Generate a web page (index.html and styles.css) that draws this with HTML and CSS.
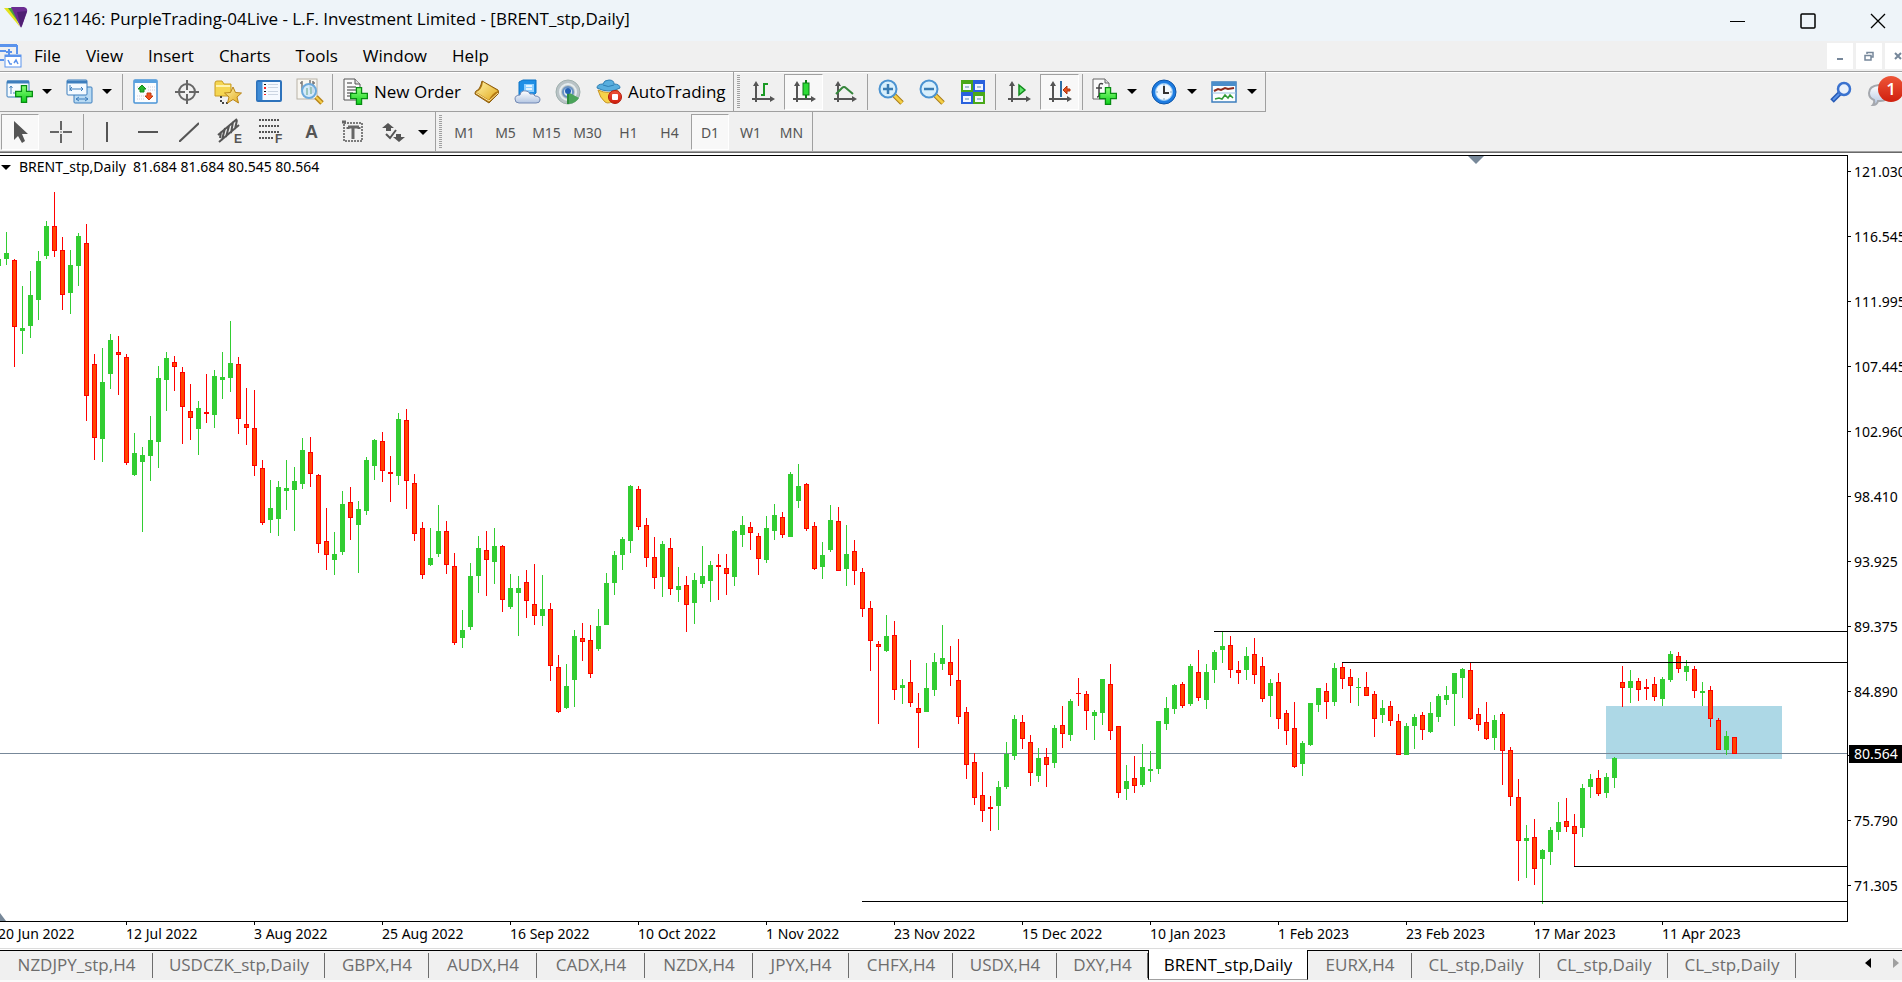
FILE: index.html
```html
<!DOCTYPE html>
<html lang="en">
<head>
    <meta charset="UTF-8">
    <meta name="viewport" content="width=device-width, initial-scale=1.0">
    <title>1621146: PurpleTrading-04Live - L.F. Investment Limited - [BRENT_stp,Daily]</title>
    <link rel="stylesheet" href="styles.css">
</head>
<body>
    <!-- shared gradients and symbols -->
    <svg class="defs" width="0" height="0" aria-hidden="true">
        <defs>
            <linearGradient id="plusFill" x1="0" y1="0" x2="0" y2="1"><stop offset="0" stop-color="#8dff7a"/><stop offset="1" stop-color="#0fd01c"/></linearGradient>
            <linearGradient id="goldFill" x1="0" y1="0" x2="1" y2="1"><stop offset="0" stop-color="#fff3a8"/><stop offset="1" stop-color="#e2a91c"/></linearGradient>
            <linearGradient id="cloudFill" x1="0" y1="0" x2="0" y2="1"><stop offset="0" stop-color="#ffffff"/><stop offset="1" stop-color="#b4c6e2"/></linearGradient>
            <linearGradient id="redFill" x1="0" y1="0" x2="0" y2="1"><stop offset="0" stop-color="#f0573a"/><stop offset="1" stop-color="#cf1c0c"/></linearGradient>
            <symbol id="plus" viewBox="0 0 14 14"><path d="M5 .5h4V5h4.500v4H9v4.500H5V9H.5V5H5z" fill="url(#plusFill)" stroke="#078c12"/></symbol>
            <symbol id="axes" viewBox="0 0 24 24"><path d="M5 22V4M1 19h19" stroke="#555" stroke-width="2" fill="none"/><path d="M2 6l3-5 3 5zM19 16l5 3-5 3z" fill="#555"/></symbol>
        </defs>
    </svg>

    <header class="titlebar">
        <svg class="logo" width="24" height="22" viewBox="0 0 24 22" aria-hidden="true">
            <path d="M0 1h7l9 19z" fill="#e3e21c"/>
            <path d="M4 1h5l8 18z" fill="#4aa23c"/>
            <path d="M7 0h13q4 1 3 5l-5 14q-1 2-2 0z" fill="#6b2c91"/>
            <path d="M13 5l10-1-6 17z" fill="#4f1f73"/>
        </svg>
        <h1>1621146: PurpleTrading-04Live - L.F. Investment Limited - [BRENT_stp,Daily]</h1>
        <div class="window-controls">
            <button aria-label="Minimize"><svg width="16" height="16"><path d="M0 8.500h15" stroke="#000"/></svg></button>
            <button aria-label="Maximize"><svg width="16" height="16"><rect x="1" y="1" width="14" height="14" rx="1" fill="none" stroke="#000" stroke-width="1.500"/></svg></button>
            <button aria-label="Close"><svg width="16" height="16"><path d="M1 1l14 14M15 1L1 15" stroke="#000" stroke-width="1.300"/></svg></button>
        </div>
    </header>

    <nav class="menubar">
        <svg width="22" height="24" viewBox="0 0 22 24" aria-hidden="true">
            <path d="M0 2h17v8M0 7h6M9 5v6M6 8h6M0 16h4" fill="none" stroke="#5b93ec" stroke-width="2"/>
            <path d="M0 1.500h17" stroke="#5b93ec" stroke-width="3"/>
            <rect x="5" y="11" width="16" height="12" fill="#fff" stroke="#5b93ec"/>
            <path d="M5 12h16" stroke="#5b93ec" stroke-width="2"/>
            <path d="M8 16l2 4h2M14 19l2-3 2 4" fill="none" stroke="#5b93ec" stroke-width="1.500"/>
        </svg>
        <ul>
            <li><button>File</button></li>
            <li><button>View</button></li>
            <li><button>Insert</button></li>
            <li><button>Charts</button></li>
            <li><button>Tools</button></li>
            <li><button>Window</button></li>
            <li><button>Help</button></li>
        </ul>
        <div class="child-controls">
            <button aria-label="Minimize chart"><svg width="10" height="10"><path d="M2 8h6" stroke="#76879a" stroke-width="2"/></svg></button>
            <button aria-label="Restore chart"><svg width="10" height="10"><path d="M3 3V1.500h6V6H7M1 4.500h6V9H1z" fill="none" stroke="#76879a" stroke-width="1.500"/></svg></button>
            <button aria-label="Close chart"><svg width="10" height="10"><path d="M2 2l6 6M8 2L2 8" stroke="#76879a" stroke-width="2"/></svg></button>
        </div>
    </nav>

    <div class="toolbar">
        <div class="group">
            <button class="tool drop" aria-label="New chart">
                <svg width="28" height="26"><rect x="1" y="2" width="22" height="16" rx="1" fill="#f4faff" stroke="#3d7ebd"/><path d="M1 3h22" stroke="#3d7ebd" stroke-width="3"/><path d="M5 15V7m-1.500 2L5 7l1.500 2M7 14h5m-2-2 2 2-2 2" fill="none" stroke="#4a86bd"/><use href="#plus" x="9" y="6" width="18" height="18"/></svg>
                <i class="arrow"></i>
            </button>
            <button class="tool drop" aria-label="Profiles">
                <svg width="28" height="26"><rect x="8" y="8" width="18" height="16" rx="1" fill="#b8daf3" stroke="#3d7ebd"/><path d="M10 20h12m-9-2-3 2 3 2m6-4 3 2-3 2" stroke="#3d7ebd" fill="none"/><rect x="1" y="1" width="20" height="15" rx="1" fill="#f4faff" stroke="#3d7ebd"/><path d="M1 3h20" stroke="#3d7ebd" stroke-width="3"/><path d="M4 6v6M4 10h13m-11-2-2 2 2 2m9-4 2 2-2 2" stroke="#3d7ebd" fill="none"/></svg>
                <i class="arrow"></i>
            </button>
            <span class="sep"></span>
            <button class="tool" aria-label="Market Watch">
                <svg width="26" height="26"><rect x="1" y="1" width="23" height="23" rx="1" fill="#fbfdff" stroke="#4a94d6" stroke-width="1.500"/><path d="M1 2.500h23" stroke="#5aa2e0" stroke-width="3"/><path d="M4 8h5M15 8h7M15 11h7M4 17h7M4 20h7" stroke="#ccd" stroke-dasharray="1 1"/><path d="M9 6l4 4h-2v3H7v-3H5z" fill="#25b62d" stroke="#138a1c"/><path d="M16 21l-4-4h2v-3h4v3h2z" fill="#f4531d" stroke="#bf3b10"/></svg>
            </button>
            <button class="tool" aria-label="Data Window">
                <svg width="26" height="26"><circle cx="13" cy="13" r="8" fill="none" stroke="#666" stroke-width="2"/><path d="M13 1v10M13 15v10M1 13h10M15 13h10" stroke="#666" stroke-width="2"/></svg>
            </button>
            <button class="tool" aria-label="Navigator">
                <svg width="28" height="26"><path d="M1 4q0-2 2-2h5l2 3h7v12H1z" fill="#f5d652" stroke="#c89b25"/><path d="M2 7h14" stroke="#fff3b0" stroke-width="2"/><path d="M7 17v7h7" stroke="#444" stroke-width="2" stroke-dasharray="2 2" fill="none"/><path d="M19 8l2.500 5.500 6 .500-4.500 4 1.500 6-5.500-3.500-5.500 3.500 1.500-6-4.500-4 6-.5z" fill="url(#goldFill)" stroke="#b98518"/></svg>
            </button>
            <button class="tool" aria-label="Terminal">
                <svg width="26" height="26"><rect x="1" y="2" width="24" height="20" rx="1" fill="#f5f9ff" stroke="#2d72bb" stroke-width="2"/><path d="M4 3v18" stroke="#3f8cd6" stroke-width="5"/><path d="M9 5v1M9 12v1" stroke="#111" stroke-width="2"/><path d="M9 8v2M9 15v1" stroke="#f22" stroke-width="2"/><path d="M12 5.500h10M12 8.500h10M12 12.500h10M12 15.500h10" stroke="#ccd5e2"/></svg>
            </button>
            <button class="tool" aria-label="Strategy Tester">
                <svg width="28" height="28"><rect x="1" y="1" width="20" height="20" fill="#f8f6f0" stroke="#b7b2a6"/><path d="M6 3v9M4 5h2M6 10h2M14 2v10M17 3v12M17 5h2" stroke="#777" stroke-width="1.500"/><path d="M20 19l6 6" stroke="#b9861a" stroke-width="5"/><path d="M20 19l6 6" stroke="#f4cd4b" stroke-width="2"/><circle cx="13" cy="13" r="7" fill="#cfe9fb" fill-opacity=".85" stroke="#6ba9dc" stroke-width="2"/><path d="M11 10v7M15 9v7" stroke="#8ba" stroke-width="1.500"/></svg>
            </button>
            <span class="sep"></span>
            <button class="tool wide order">
                <svg width="26" height="28"><path d="M2 1h11l5 5v16H2z" fill="#fafafa" stroke="#555"/><path d="M13 1v5h5" fill="#ddd" stroke="#555"/><path d="M5 5h5M5 9h9M5 12h9M5 15h6M5 18h4" stroke="#777" stroke-width="1.500"/><use href="#plus" x="8" y="9" width="18" height="18"/></svg>
                New Order
            </button>
            <button class="tool" aria-label="MetaEditor">
                <svg width="26" height="26"><path d="M8 2l16 9q1 2 0 4l-9 9L1 15q0-2 1-3 4-1 6-10z" fill="#b57a12" stroke="#8e5f0d"/><path d="M9 3l15 9q-6 2-9 9L2 13q6-2 7-10z" fill="url(#goldFill)"/><path d="M2 14l13 8 9-8" fill="none" stroke="#ffe9a2"/></svg>
            </button>
            <button class="tool" aria-label="Virtual Hosting">
                <svg width="28" height="26"><path d="M5 3l4-2h13v13l-4 3H5z" fill="#1e8fe6" stroke="#0f74c5"/><path d="M10 5h10v8H10z" fill="#8fd0ff"/><path d="M12 7h6M12 10h6" stroke="#fff" stroke-width="1.500"/><path d="M5 24q-4 0-4-4t5-4q1-5 6-4 3 0 4 3 4-1 5 2 5 0 5 4 0 3-4 3z" fill="url(#cloudFill)" stroke="#7289b5"/></svg>
            </button>
            <button class="tool" aria-label="Signals">
                <svg width="28" height="26"><circle cx="13" cy="13" r="12" fill="#b9c3c6" stroke="#9fb0ae"/><circle cx="13" cy="13" r="8" fill="none" stroke="#e4ecee" stroke-width="2"/><circle cx="13" cy="13" r="5" fill="#dce8f2" stroke="#6791c2" stroke-width="2"/><path d="M13 13l1 12q7-1 10-6z" fill="#4ba45a"/><path d="M13 13v12" stroke="#2c8b3b" stroke-width="2"/><circle cx="13" cy="12" r="3" fill="#2161b5"/></svg>
            </button>
            <button class="tool wide auto">
                <svg width="26" height="26"><path d="M2 11q11 5 20 0l-3 9q-6 6-10 3-5-4-7-12z" fill="#f6d24a" stroke="#c8962a"/><path d="M1 9q0-4 6-4 1-4 6-4t5 4q6 0 6 4-11 6-23 0z" fill="#58aede" stroke="#2e7fb4"/><path d="M7 6q5 3 11 0" fill="none" stroke="#2e7fb4"/><circle cx="19" cy="18" r="6.500" fill="url(#redFill)" stroke="#b41a0b"/><rect x="16" y="15" width="6" height="6" rx="1" fill="#fff"/></svg>
                AutoTrading
            </button>
        </div>
        <div class="group">
            <span class="grip"></span>
            <button class="tool" aria-label="Bar Chart">
                <svg width="24" height="24"><use href="#axes" width="24" height="24"/><path d="M10 15h3V4h4" fill="none" stroke="#1a9a24" stroke-width="2"/></svg>
            </button>
            <button class="tool on" aria-label="Candlesticks">
                <svg width="24" height="24"><use href="#axes" width="24" height="24"/><path d="M14 0v18" stroke="#0b7d14" stroke-width="2"/><rect x="11" y="3" width="6" height="12" fill="#2ddc37" stroke="#0b7d14"/></svg>
            </button>
            <button class="tool" aria-label="Line Chart">
                <svg width="24" height="24"><use href="#axes" width="24" height="24"/><path d="M3 14l6-6q2-2 4 0l7 6" fill="none" stroke="#35853b" stroke-width="2"/></svg>
            </button>
            <span class="sep"></span>
            <button class="tool" aria-label="Zoom In">
                <svg width="26" height="26"><path d="M16 16l8 8" stroke="#a87c16" stroke-width="5"/><path d="M16 16l8 8" stroke="#f3cd45" stroke-width="3"/><circle cx="10" cy="10" r="8.500" fill="#d8effc" stroke="#4b93d1" stroke-width="2"/><path d="M10 5v10M5 10h10" stroke="#3a7cb3" stroke-width="2.500"/></svg>
            </button>
            <button class="tool" aria-label="Zoom Out">
                <svg width="26" height="26"><path d="M16 16l8 8" stroke="#a87c16" stroke-width="5"/><path d="M16 16l8 8" stroke="#f3cd45" stroke-width="3"/><circle cx="10" cy="10" r="8.500" fill="#d8effc" stroke="#4b93d1" stroke-width="2"/><path d="M5 10h10" stroke="#3a7cb3" stroke-width="2.500"/></svg>
            </button>
            <button class="tool" aria-label="Tile Windows">
                <svg width="26" height="26"><path d="M1 1h12v12H1zM13 13h12v12H13z" fill="#4aa81a"/><path d="M13 1h12v12H13zM1 13h12v12H1z" fill="#2961dd"/><path d="M3 5h8v6H3zM15 5h8v6h-8zM3 17h8v6H3zM15 17h8v6h-8z" fill="#f3f7ff"/><path d="M5 8h4M17 8h4M5 20h4M17 20h4" stroke="#8fb0c9" stroke-width="1.500"/></svg>
            </button>
            <span class="sep"></span>
            <button class="tool" aria-label="Auto Scroll">
                <svg width="24" height="24"><use href="#axes" width="24" height="24"/><path d="M12 5l6 5-6 5z" fill="#5fe56a" stroke="#128a1c" stroke-width="1.500"/></svg>
            </button>
            <button class="tool on" aria-label="Chart Shift">
                <svg width="24" height="24"><use href="#axes" width="24" height="24"/><path d="M13 1v16" stroke="#2c6fa5" stroke-width="2"/><path d="M15 10l4-4v3h3v2h-3v3z" fill="#e2501e" stroke="#b1340c"/></svg>
            </button>
            <span class="sep"></span>
            <button class="tool drop" aria-label="Indicators">
                <svg width="26" height="28"><path d="M2 1h12l4 4v16H2z" fill="#fafafa" stroke="#666"/><path d="M14 1v4h4" fill="#ddd" stroke="#666"/><path d="M12 6q-4-2-4 3v8q0 2-2 2M5 10h6" fill="none" stroke="#444" stroke-width="1.500"/><use href="#plus" x="8" y="9" width="18" height="18"/></svg>
                <i class="arrow"></i>
            </button>
            <button class="tool drop" aria-label="Periods">
                <svg width="26" height="26"><circle cx="13" cy="13" r="12" fill="#1d7be0" stroke="#0d55a8"/><circle cx="13" cy="13" r="8.500" fill="#f2f8fd" stroke="#8cc6f8"/><path d="M13 7v7h5" fill="none" stroke="#333" stroke-width="2"/><path d="M13 5v2M13 19v2M5 13h2M19 13h2" stroke="#7fa8c8"/></svg>
                <i class="arrow"></i>
            </button>
            <button class="tool drop" aria-label="Templates">
                <svg width="26" height="24"><rect x="1" y="2" width="24" height="20" fill="#fbfdff" stroke="#3d7ebd" stroke-width="1.500"/><path d="M1 4h24" stroke="#4a8dca" stroke-width="4"/><path d="M1 13h24" stroke="#9cc4e4"/><path d="M3 11l4-2 3 1 4-2 3 1 6-1" fill="none" stroke="#8c2a1c" stroke-width="2"/><path d="M4 19l4-1 3 1 3-4 3 3 2-3 3 3" fill="none" stroke="#2f9a35" stroke-width="1.500"/></svg>
                <i class="arrow"></i>
            </button>
        </div>
        <div class="side-tools">
            <button aria-label="Search">
                <svg width="22" height="22"><path d="M2 20l8-8" stroke="#2559b5" stroke-width="5"/><path d="M3 19l7-7" stroke="#5b93e8" stroke-width="2"/><circle cx="14" cy="8" r="6" fill="#eaf1fb" stroke="#3a72cf" stroke-width="2.500"/></svg>
            </button>
            <button class="messages" aria-label="Messages">
                <svg width="28" height="24"><path d="M11 2q10-1 10 8t-11 8q-1 4-5 4 2-2 1-5-5-2-5-7 0-7 10-8z" fill="url(#cloudFill)" stroke="#a5a8ae" stroke-width="2"/></svg>
                <span class="badge">1</span>
            </button>
        </div>
    </div>

    <div class="toolbar lines">
        <div class="group">
            <button class="tool on" aria-label="Cursor">
                <svg width="24" height="24"><path d="M6 1v19l4-4 4 7 3-2-3-7h6z" fill="#555"/></svg>
            </button>
            <button class="tool" aria-label="Crosshair">
                <svg width="24" height="24"><path d="M12 1v9M12 14v9M1 12h9M14 12h9M12 11.500v1" stroke="#666" stroke-width="2"/></svg>
            </button>
            <span class="sep"></span>
            <button class="tool" aria-label="Vertical Line"><svg width="20" height="20"><path d="M10 0v20" stroke="#555" stroke-width="2"/></svg></button>
            <button class="tool" aria-label="Horizontal Line"><svg width="20" height="20"><path d="M0 10h20" stroke="#555" stroke-width="2"/></svg></button>
            <button class="tool" aria-label="Trendline"><svg width="20" height="20"><path d="M0 20L20 1" stroke="#555" stroke-width="2"/></svg></button>
            <button class="tool" aria-label="Equidistant Channel">
                <svg width="26" height="28"><path d="M1 17L20 1M2 24L22 7M4 14l-1 6M8 10l-3 12M12 8L9 19M16 4l-2 11M20 2l-2 9" stroke="#555" stroke-width="2"/><text x="17" y="25" class="mark">E</text></svg>
            </button>
            <button class="tool" aria-label="Fibonacci">
                <svg width="26" height="28"><path d="M1 2h20M1 8h20M1 14h20M1 20h14" stroke="#555" stroke-width="2" stroke-dasharray="2 1"/><text x="17" y="25" class="mark">F</text></svg>
            </button>
            <button class="tool letter">A</button>
            <button class="tool" aria-label="Text Label">
                <svg width="22" height="24"><rect x="2" y="3" width="18" height="18" fill="none" stroke="#555" stroke-width="1.500" stroke-dasharray="2 1"/><path d="M0 2h4M6 7h11M11 7v12M6 7v2M17 7v2" stroke="#666" stroke-width="3"/></svg>
            </button>
            <button class="tool drop" aria-label="Arrows">
                <svg width="24" height="24"><path d="M6 3l6 5H9v3H4V8H0zM17 22l-6-5h3v-3h5v3h4z" fill="#555"/><path d="M4 14l4 4 6-8" fill="none" stroke="#555" stroke-width="2"/></svg>
                <i class="arrow"></i>
            </button>
        </div>
        <div class="group periods">
            <span class="grip"></span>
            <button class="tool">M1</button>
            <button class="tool">M5</button>
            <button class="tool">M15</button>
            <button class="tool">M30</button>
            <button class="tool">H1</button>
            <button class="tool">H4</button>
            <button class="tool on">D1</button>
            <button class="tool">W1</button>
            <button class="tool">MN</button>
        </div>
    </div>

    <main class="chart">
        <div class="plot">
            <svg id="candles" role="img" aria-label="BRENT_stp daily candles"></svg>
            <p class="quote"><i class="arrow"></i>BRENT_stp,Daily&nbsp; 81.684 81.684 80.545 80.564</p>
            <i class="shift-mark"></i>
            <i class="corner-mark"></i>
        </div>
        <ol class="prices">
            <li>121.030</li>
            <li>116.545</li>
            <li>111.995</li>
            <li>107.445</li>
            <li>102.960</li>
            <li>98.410</li>
            <li>93.925</li>
            <li>89.375</li>
            <li>84.890</li>
            <li class="current"><span>80.564</span></li>
            <li>75.790</li>
            <li>71.305</li>
        </ol>
        <ol class="dates">
            <li>20 Jun 2022</li>
            <li>12 Jul 2022</li>
            <li>3 Aug 2022</li>
            <li>25 Aug 2022</li>
            <li>16 Sep 2022</li>
            <li>10 Oct 2022</li>
            <li>1 Nov 2022</li>
            <li>23 Nov 2022</li>
            <li>15 Dec 2022</li>
            <li>10 Jan 2023</li>
            <li>1 Feb 2023</li>
            <li>23 Feb 2023</li>
            <li>17 Mar 2023</li>
            <li>11 Apr 2023</li>
        </ol>
    </main>

    <footer class="tabs">
        <div class="tab-list">
            <button>NZDJPY_stp,H4</button>
            <button>USDCZK_stp,Daily</button>
            <button>GBPX,H4</button>
            <button>AUDX,H4</button>
            <button>CADX,H4</button>
            <button>NZDX,H4</button>
            <button>JPYX,H4</button>
            <button>CHFX,H4</button>
            <button>USDX,H4</button>
            <button>DXY,H4</button>
            <button class="active">BRENT_stp,Daily</button>
            <button>EURX,H4</button>
            <button>CL_stp,Daily</button>
            <button>CL_stp,Daily</button>
            <button>CL_stp,Daily</button>
        </div>
        <div class="tab-scroll">
            <button aria-label="Scroll left"><svg width="6" height="10"><path d="M6 0v10L0 5z" fill="#000"/></svg></button>
            <button aria-label="Scroll right"><svg width="6" height="10"><path d="M0 0v10l6-5z" fill="#a0a0a0"/></svg></button>
        </div>
    </footer>
    <script src="script.js"></script>
</body>
</html>
```

FILE: styles.css
```css
* {
    box-sizing: border-box;
}

body {
    display: flex;
    flex-direction: column;
    height: 100vh;
    margin: 0;
    overflow: hidden;
    background: #f0f0f0;
    color: #000;
    font-family: "Open Sans", "Noto Sans", sans-serif;
    font-size: 17px;
}

button {
    padding: 0;
    border: 0;
    background: none;
    color: inherit;
    font: inherit;
}

ul,
ol,
p,
h1 {
    margin: 0;
    padding: 0;
    list-style: none;
}

svg {
    flex: none;
    display: block;
}

.defs {
    position: absolute;
}

/* title bar */
.titlebar {
    display: flex;
    align-items: center;
    flex: none;
    height: 41px;
    padding-left: 4px;
    background: #eef4f9;
}

.titlebar h1 {
    flex: 1;
    margin-left: 5px;
    padding-bottom: 4px;
    font-size: 17px;
    font-weight: 400;
    line-height: 24px;
    white-space: nowrap;
}

.logo {
    margin-bottom: 6px;
}

.window-controls {
    display: flex;
    height: 37px;
    margin-right: -11px;
}

.window-controls button {
    display: grid;
    place-items: center;
    width: 70px;
}

/* menu */
.menubar {
    display: flex;
    align-items: center;
    flex: none;
    height: 30px;
}

.menubar ul {
    display: flex;
    flex: 1;
}

.menubar li button {
    padding: 0 13px 0 12px;
    line-height: 30px;
}

.child-controls {
    display: flex;
    gap: 3px;
    width: 75px;
    overflow: hidden;
}

.child-controls button {
    display: grid;
    flex: none;
    place-items: center;
    width: 26px;
    height: 26px;
    background: #fff;
}

/* toolbars */
.toolbar {
    display: flex;
    flex: none;
    height: 41px;
    border-top: 1px solid #a0a0a0;
    box-shadow: inset 0 1px #fff;
}

.toolbar.lines {
    border-top: 0;
    border-bottom: 1px solid #696969;
    box-shadow: inset 0 -1px #a0a0a0;
}

.group {
    display: flex;
    align-items: center;
    border-right: 1px solid #a0a0a0;
    border-bottom: 1px solid #a0a0a0;
}

.toolbar.lines .group {
    border-bottom: 0;
}

.tool {
    display: flex;
    align-items: center;
    justify-content: center;
    width: 41px;
    height: 36px;
}

.tool.on {
    width: 39px;
    margin: 0 1px;
    border: 1px solid #fff;
    border-top-color: #a0a0a0;
    border-left-color: #a0a0a0;
    background: #f8f8f8;
}

.lines .tool.on {
    width: 38px;
}

.tool.drop {
    justify-content: space-between;
    width: 60px;
    padding: 0 8px 0 6px;
}

.lines .tool.drop {
    width: 62px;
    padding: 0 7px 0 9px;
}

.tool.wide {
    justify-content: flex-start;
    gap: 6px;
    padding-left: 7px;
    white-space: nowrap;
}

.tool.order {
    width: 131px;
}

.tool.auto {
    width: 144px;
}

.tool.letter {
    color: #555;
    font-family: "Liberation Sans", sans-serif;
    font-size: 18px;
    font-weight: 700;
}

.mark {
    fill: #555;
    font: 700 12px "Liberation Sans", sans-serif;
}

.arrow {
    flex: none;
    border: 5px solid transparent;
    border-top-color: #000;
    border-bottom: 0;
}

.sep {
    width: 5px;
    height: 36px;
    background: linear-gradient(#a0a0a0, #a0a0a0) center / 1px 100% no-repeat;
}

.grip {
    width: 8px;
    height: 34px;
    background: repeating-linear-gradient(#a0a0a0 0 1px, #f0f0f0 1px 2px) center / 3px 100% no-repeat;
}

.periods .tool {
    color: #555;
    font-family: "Noto Sans", sans-serif;
    font-size: 14px;
}

.side-tools {
    display: flex;
    align-items: center;
    gap: 16px;
    margin-left: auto;
}

.messages {
    position: relative;
    width: 34px;
    overflow: hidden;
    padding: 10px 0 4px;
}

.badge {
    position: absolute;
    top: 3px;
    left: 10px;
    width: 26px;
    height: 26px;
    border-radius: 50%;
    background: linear-gradient(#ee5638, #d0200e);
    color: #fff;
    font-weight: 600;
    line-height: 26px;
}

/* chart */
.chart {
    display: grid;
    flex: 1;
    grid-template-columns: minmax(0, 1fr) 54px;
    grid-template-rows: minmax(0, 1fr) 27px;
    min-height: 0;
    padding-top: 2px;
    border-bottom: 1px solid #fff;
    background: #fff;
    font-family: "Noto Sans", sans-serif;
    font-size: 14px;
    line-height: 20px;
}

.plot {
    position: relative;
    overflow: hidden;
    border: 1px solid #000;
    border-left: 0;
}

#candles {
    width: 100%;
    height: 100%;
}

.quote {
    position: absolute;
    top: 1px;
    left: 1px;
    display: flex;
    align-items: center;
    gap: 8px;
    white-space: nowrap;
}

.shift-mark {
    position: absolute;
    top: 0;
    right: 363px;
    border: 8px solid transparent;
    border-top-color: #778899;
    border-bottom: 0;
}

.corner-mark {
    position: absolute;
    bottom: 0;
    left: 0;
    border-top: 8px solid transparent;
    border-left: 6px solid #778899;
}

.prices {
    padding-top: 6px;
    overflow: hidden;
    line-height: 22px;
}

.prices li {
    height: 65px;
    padding-left: 6px;
    background: linear-gradient(#000, #000) 0 10px / 3px 1px no-repeat;
}

.prices .current {
    padding: 0 0 0 1px;
}

.prices .current span {
    display: block;
    width: 53px;
    height: 18px;
    margin-top: -1px;
    padding-left: 5px;
    background: #000;
    color: #fff;
    line-height: 18px;
}

.dates {
    display: flex;
    grid-column: 1 / 3;
    overflow: hidden;
    border-bottom: 1px solid #dcdcdc;
}

.dates li {
    flex: none;
    width: 128px;
    padding-top: 2px;
    background: linear-gradient(#000, #000) 0 0 / 1px 3px no-repeat;
}

.dates li:first-child {
    margin-left: -2px;
}

/* chart tabs */
.tabs {
    display: flex;
    align-items: stretch;
    flex: none;
    height: 32px;
    border-bottom: 2px solid #fafafa;
    background: linear-gradient(#000, #000) top / 100% 1px no-repeat;
    color: #6d6d6d;
}

.tab-list {
    display: grid;
    flex: 1;
    grid-template-columns: 153px 172px 104px 108px 108px 108px 96px 104px 104px 91px 160px 104px 128px 128px 128px;
}

.tab-list button {
    height: 28px;
    background: linear-gradient(#6d6d6d, #6d6d6d) right bottom / 1px 25px no-repeat;
    line-height: 29px;
    text-align: center;
    white-space: nowrap;
}

.tab-list .active {
    height: 30px;
    border: 1px solid #000;
    border-top: 0;
    border-bottom-color: #a0a0a0;
    background: #fff;
    color: #000;
}

.tab-scroll {
    display: flex;
    align-items: center;
    gap: 22px;
    padding: 0 3px 4px;
}
```

FILE: script.js
```js
// one row per bar: up flag, high, body top, body bottom, low (chart rows in px)
const bars = [
    [1,259,259,266,266],[1,232,253,259,265],[0,259,260,327,367],[1,286,328,331,354],[1,271,295,326,338],
    [1,251,261,300,320],[1,221,226,256,259],[0,192,226,251,257],[0,237,250,295,310],[1,250,265,293,314],
    [1,233,236,266,286],[0,224,243,396,421],[0,354,364,438,460],[1,348,382,439,462],[1,334,340,374,389],
    [0,336,352,355,395],[0,354,357,463,465],[1,433,453,475,476],[1,447,455,462,532],[1,416,440,456,481],
    [1,366,378,442,468],[1,352,358,380,411],[0,356,362,367,391],[0,367,372,407,444],[0,384,411,418,440],
    [1,401,408,429,455],[0,374,412,414,423],[1,370,376,415,428],[1,352,377,380,399],[1,321,363,378,392],
    [0,357,364,419,434],[0,388,424,428,445],[0,390,428,466,476],[0,460,468,523,525],[1,480,508,520,533],
    [1,481,487,519,536],[1,460,488,491,510],[1,467,481,490,531],[1,438,450,484,489],[0,437,452,474,487],
    [0,474,475,544,553],[0,508,541,555,570],[1,532,554,560,575],[1,491,504,552,555],[0,487,502,518,540],
    [1,501,509,525,573],[1,457,460,511,515],[1,439,440,466,480],[0,432,441,471,482],[0,456,472,474,502],
    [1,413,419,476,485],[0,409,420,481,509],[0,474,483,534,541],[0,522,528,575,579],[1,528,558,565,566],
    [1,505,531,554,557],[0,521,531,565,574],[0,553,566,643,645],[1,610,630,638,648],[1,563,576,627,630],
    [1,536,548,576,593],[0,531,550,560,596],[1,528,546,562,584],[0,545,546,600,612],[1,574,588,607,609],
    [1,576,588,593,636],[0,570,582,601,618],[0,564,604,616,625],[1,575,609,616,626],[0,603,609,666,681],
    [0,655,667,712,713],[1,664,686,708,709],[1,630,636,680,707],[0,623,638,642,661],[0,625,640,674,678],
    [1,609,626,649,651],[1,573,583,625,625],[1,551,555,583,595],[1,537,539,555,570],[1,485,486,541,553],
    [0,486,489,527,530],[0,518,525,558,567],[0,537,557,578,589],[1,541,544,577,597],[0,538,548,589,595],
    [1,567,586,590,602],[0,576,585,605,632],[1,573,580,603,624],[1,546,576,584,588],[1,561,565,581,602],
    [0,554,565,567,600],[0,554,568,574,595],[1,530,531,577,586],[1,516,525,535,547],[0,522,527,533,550],
    [0,533,536,559,575],[1,516,528,560,563],[1,504,515,531,540],[0,512,517,535,538],[1,472,474,537,537],
    [1,464,486,501,508],[0,483,484,529,531],[0,522,526,569,570],[1,542,555,567,579],[1,505,520,550,552],
    [0,507,521,571,571],[1,525,554,569,586],[0,540,551,571,585],[0,568,572,609,617],[0,601,608,641,671],
    [0,641,644,647,724],[1,615,636,651,652],[0,621,635,690,700],[1,679,685,688,704],[0,660,682,703,707],
    [0,693,708,713,748],[1,663,688,712,712],[1,653,662,690,696],[1,625,658,664,670],[0,646,662,675,686],
    [0,639,680,717,724],[0,707,712,765,779],[0,753,762,798,805],[0,772,795,811,822],[0,796,807,809,831],
    [1,781,787,806,830],[1,742,754,787,789],[1,715,719,756,760],[0,715,722,739,749],[0,735,742,773,786],
    [1,748,758,776,782],[0,748,757,765,787],[1,725,728,763,768],[0,706,725,734,748],[1,699,701,735,741],
    [0,678,693,694,706],[0,691,694,711,730],[1,710,712,716,740],[1,679,679,713,725],[0,664,684,731,740],
    [0,726,726,793,798],[1,765,781,789,800],[0,756,778,786,793],[1,744,767,785,787],[1,751,769,771,782],
    [1,721,721,769,774],[1,697,708,724,730],[1,684,685,709,714],[0,682,684,706,708],[1,664,666,704,706],
    [0,650,672,698,701],[1,664,672,700,709],[1,650,652,670,683],[1,632,646,650,663],[0,636,645,670,678],
    [0,661,670,673,684],[1,647,656,670,680],[0,638,654,675,684],[0,657,666,699,702],[1,679,683,696,717],
    [0,673,682,719,729],[0,710,713,731,745],[0,702,728,767,768],[1,741,743,764,776],[1,703,703,745,746],
    [1,688,688,705,712],[0,683,691,702,719],[1,663,668,702,706],[0,663,667,679,689],[0,669,677,686,703],
    [1,678,687,688,706],[0,672,687,696,696],[0,691,694,719,737],[1,700,708,715,723],[0,701,706,721,726],
    [0,714,721,755,755],[1,723,726,755,755],[1,714,717,726,749],[0,712,715,730,740],[1,702,713,732,733],
    [1,694,696,717,722],[1,686,695,700,705],[1,673,673,694,726],[1,668,669,678,698],[0,663,670,719,720],
    [0,708,714,725,731],[0,702,722,739,740],[1,715,720,738,750],[0,712,714,751,785],[0,747,750,797,806],
    [0,779,797,841,881],[1,825,838,841,878],[0,819,837,869,885],[1,849,850,859,904],[1,827,830,852,865],
    [1,802,822,832,840],[0,798,821,827,832],[0,814,826,834,866],[1,784,788,828,837],[1,774,779,787,798],
    [0,770,778,794,796],[1,773,777,793,798],[1,757,758,778,788],[0,666,682,688,707],[1,670,681,688,703],
    [0,678,681,690,701],[0,679,687,689,700],[0,677,684,697,701],[1,677,679,699,706],[1,651,654,680,682],
    [0,652,656,669,673],[1,660,666,672,681],[0,666,669,691,698],[1,682,691,693,706],[0,686,690,719,727],
    [0,718,720,750,750],[1,731,736,750,755],[0,737,737,754,754]
];

// support and resistance lines: start x, row
const levels = [[1214, 631], [1342, 662], [1574, 866], [862, 901]];

const step = 8;
const firstX = -2;
const topRow = 156;

function rect(x, y, width, height, fill) {
    return `<rect x="${x}" y="${y - topRow}" width="${width}" height="${height}" fill="${fill}"/>`;
}

function drawChart() {
    let out = rect(1606, 706, 176, 53, '#add8e6');
    out += rect(0, 753, '100%', 1, '#778899');

    bars.forEach(([up, high, top, bottom, low], i) => {
        const x = firstX + i * step;
        const color = up ? '#32cd32' : '#ff0000';
        out += rect(x, high, 1, low - high, color);
        out += rect(x - 2, top, 5, bottom - top, color);
        if (!up && bottom - top > 2) {
            out += rect(x - 1, top + 1, 3, bottom - top - 2, '#ff4500');
        }
    });

    levels.forEach(([x, y]) => {
        out += rect(x, y, '100%', 1, '#000');
    });

    document.getElementById('candles').innerHTML = out;
}

drawChart();
```
